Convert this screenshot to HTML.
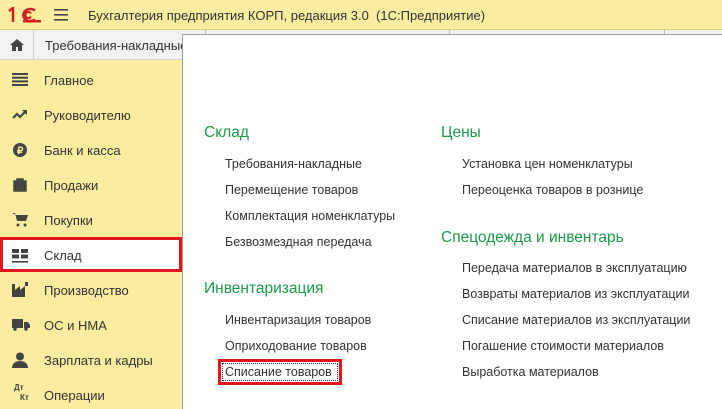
<!DOCTYPE html>
<html><head><meta charset="utf-8"><style>
*{margin:0;padding:0;box-sizing:border-box}
html,body{width:722px;height:409px;overflow:hidden}
body{position:relative;background:#fff;font-family:"Liberation Sans",Arial,sans-serif;color:#333;font-size:13px}
.top{position:absolute;left:0;top:0;width:722px;height:30px;background:#fbeca0;border-bottom:1px solid #d8cc8a}
.tabs{position:absolute;left:0;top:30px;width:722px;height:30px;background:#f2f2f2;border-bottom:1px solid #d0d0d0}
.side{position:absolute;left:0;top:60px;width:182px;height:349px;background:#fbeca0}
.panel{position:absolute;left:182px;top:34px;width:540px;height:375px;background:#fff;border-left:1px solid #a0a0a0;border-top:1px solid #a0a0a0}
.t{position:absolute;white-space:nowrap}
.si{position:absolute;left:44px;font-size:13px;color:#333}
.ic{position:absolute;left:12px}
.h{position:absolute;color:#1a9a4a;font-size:15.5px;white-space:nowrap}
.l{position:absolute;font-size:12.5px;white-space:nowrap;color:#333}
</style></head><body>
<div class="top">
<svg style="position:absolute;left:8px;top:7px" width="34" height="16"><path d="M1 4l4-3v14" stroke="#d42020" stroke-width="2.5" fill="none"/><path d="M27 3.5A7 6 0 1 0 27 12.5" stroke="#d42020" stroke-width="2.5" fill="none"/><path d="M23 6.5A3 3 0 1 0 23 9.5" stroke="#d42020" stroke-width="2" fill="none"/><rect x="15" y="13" width="18" height="2.5" fill="#d42020"/></svg>
<svg style="position:absolute;left:54px;top:9px" width="14" height="12"><rect y="0" width="14" height="1.6" fill="#444"/><rect y="5" width="14" height="1.6" fill="#444"/><rect y="10" width="14" height="1.6" fill="#444"/></svg>
<div class="t" style="left:88px;top:8px;font-size:13px;color:#333">Бухгалтерия предприятия КОРП, редакция 3.0&nbsp; (1С:Предприятие)</div>
</div>
<div class="tabs">
<div style="position:absolute;left:0;top:0;width:34px;height:30px;border-right:1px solid #ccc"></div>
<svg style="position:absolute;left:10px;top:9px" width="14" height="12"><path d="M7 0L0 6h2v6h4V8h2v4h4V6h2z" fill="#444"/></svg>
<div class="t" style="left:45px;top:8px">Требования-накладные</div>
<div style="position:absolute;left:205px;top:0;width:1px;height:4px;background:#bbb"></div>
<div style="position:absolute;left:449px;top:0;width:1px;height:4px;background:#bbb"></div>
<div style="position:absolute;left:664px;top:0;width:1px;height:4px;background:#bbb"></div>
</div>
<div class="side">
<svg class="ic" style="top:13px" width="16" height="13"><g fill="#444"><rect y="0" width="16" height="2"/><rect y="3.7" width="16" height="2"/><rect y="7.4" width="16" height="2"/><rect y="11" width="16" height="2"/></g></svg>
<div class="si" style="top:13px">Главное</div>
<svg class="ic" style="top:48px" width="16" height="12"><path d="M1 10l4-4 3 3 5-5" stroke="#444" stroke-width="2.2" fill="none"/><path d="M10 2h5v5z" fill="#444"/></svg>
<div class="si" style="top:48px">Руководителю</div>
<svg class="ic" style="top:82px" width="16" height="16"><circle cx="8" cy="8" r="7" fill="#444"/><text x="5" y="12" font-size="10" fill="#fbeca0" font-family="Liberation Sans" font-weight="bold">₽</text></svg>
<div class="si" style="top:83px">Банк и касса</div>
<svg class="ic" style="top:117px" width="16" height="15"><path d="M2 4h12v10H2z M5 4V2h6v2" fill="#444" stroke="#444" stroke-width="1.5"/></svg>
<div class="si" style="top:118px">Продажи</div>
<svg class="ic" style="top:152px" width="16" height="15"><path d="M0 1h3l2 8h9l2-6H4" fill="#444"/><circle cx="6" cy="13" r="1.5" fill="#444"/><circle cx="13" cy="13" r="1.5" fill="#444"/></svg>
<div class="si" style="top:153px">Покупки</div>
<div style="position:absolute;left:0;top:177px;width:182px;height:35px;background:#fff;border:3px solid #e0161e"></div>
<svg class="ic" style="top:189px" width="16" height="14"><g fill="#444"><rect x="0" y="0" width="7" height="4"/><rect x="9" y="0" width="7" height="4"/><rect x="0" y="5.5" width="7" height="4"/><rect x="9" y="5.5" width="7" height="4"/><rect x="0" y="12" width="16" height="1.6"/></g></svg>
<div class="si" style="top:188px">Склад</div>
<svg class="ic" style="top:222px" width="16" height="15"><path d="M0 15V2h3v6l5-4v4l5-4v11z M13 0h3v4h-3z" fill="#444"/></svg>
<div class="si" style="top:223px">Производство</div>
<svg class="ic" style="top:258px" width="18" height="13"><path d="M0 1h11v9H0z M12 4h4l2 3v3h-6z" fill="#444"/><circle cx="3" cy="11" r="1.8" fill="#444"/><circle cx="14" cy="11" r="1.8" fill="#444"/></svg>
<div class="si" style="top:258px">ОС и НМА</div>
<svg class="ic" style="top:292px" width="16" height="16"><circle cx="8" cy="4.5" r="4" fill="#444"/><path d="M0 16c0-5 4-7 8-7s8 2 8 7z" fill="#444"/></svg>
<div class="si" style="top:293px">Зарплата и кадры</div>
<div class="t" style="left:14px;top:323px;font-size:8px;font-weight:bold;color:#444">Дт</div>
<div class="t" style="left:20px;top:333px;font-size:8px;font-weight:bold;color:#444">Кт</div>
<div class="si" style="top:328px">Операции</div>
</div>
<div class="panel"></div>
<div class="h" style="left:204px;top:124px">Склад</div>
<div class="l" style="left:225px;top:157px">Требования-накладные</div>
<div class="l" style="left:225px;top:183px">Перемещение товаров</div>
<div class="l" style="left:225px;top:209px">Комплектация номенклатуры</div>
<div class="l" style="left:225px;top:235px">Безвозмездная передача</div>
<div class="h" style="left:204px;top:280px">Инвентаризация</div>
<div class="l" style="left:225px;top:313px">Инвентаризация товаров</div>
<div class="l" style="left:225px;top:339px">Оприходование товаров</div>
<div style="position:absolute;left:218px;top:359px;width:124px;height:26px;border:3px solid #e0161e"></div>
<div style="position:absolute;left:222px;top:363px;width:116px;height:18px;border:1px dotted #333"></div>
<div class="l" style="left:225px;top:365px">Списание товаров</div>
<div class="h" style="left:441px;top:124px">Цены</div>
<div class="l" style="left:462px;top:157px">Установка цен номенклатуры</div>
<div class="l" style="left:462px;top:183px">Переоценка товаров в рознице</div>
<div class="h" style="left:441px;top:229px">Спецодежда и инвентарь</div>
<div class="l" style="left:462px;top:261px">Передача материалов в эксплуатацию</div>
<div class="l" style="left:462px;top:287px">Возвраты материалов из эксплуатации</div>
<div class="l" style="left:462px;top:313px">Списание материалов из эксплуатации</div>
<div class="l" style="left:462px;top:339px">Погашение стоимости материалов</div>
<div class="l" style="left:462px;top:365px">Выработка материалов</div>
</body></html>
